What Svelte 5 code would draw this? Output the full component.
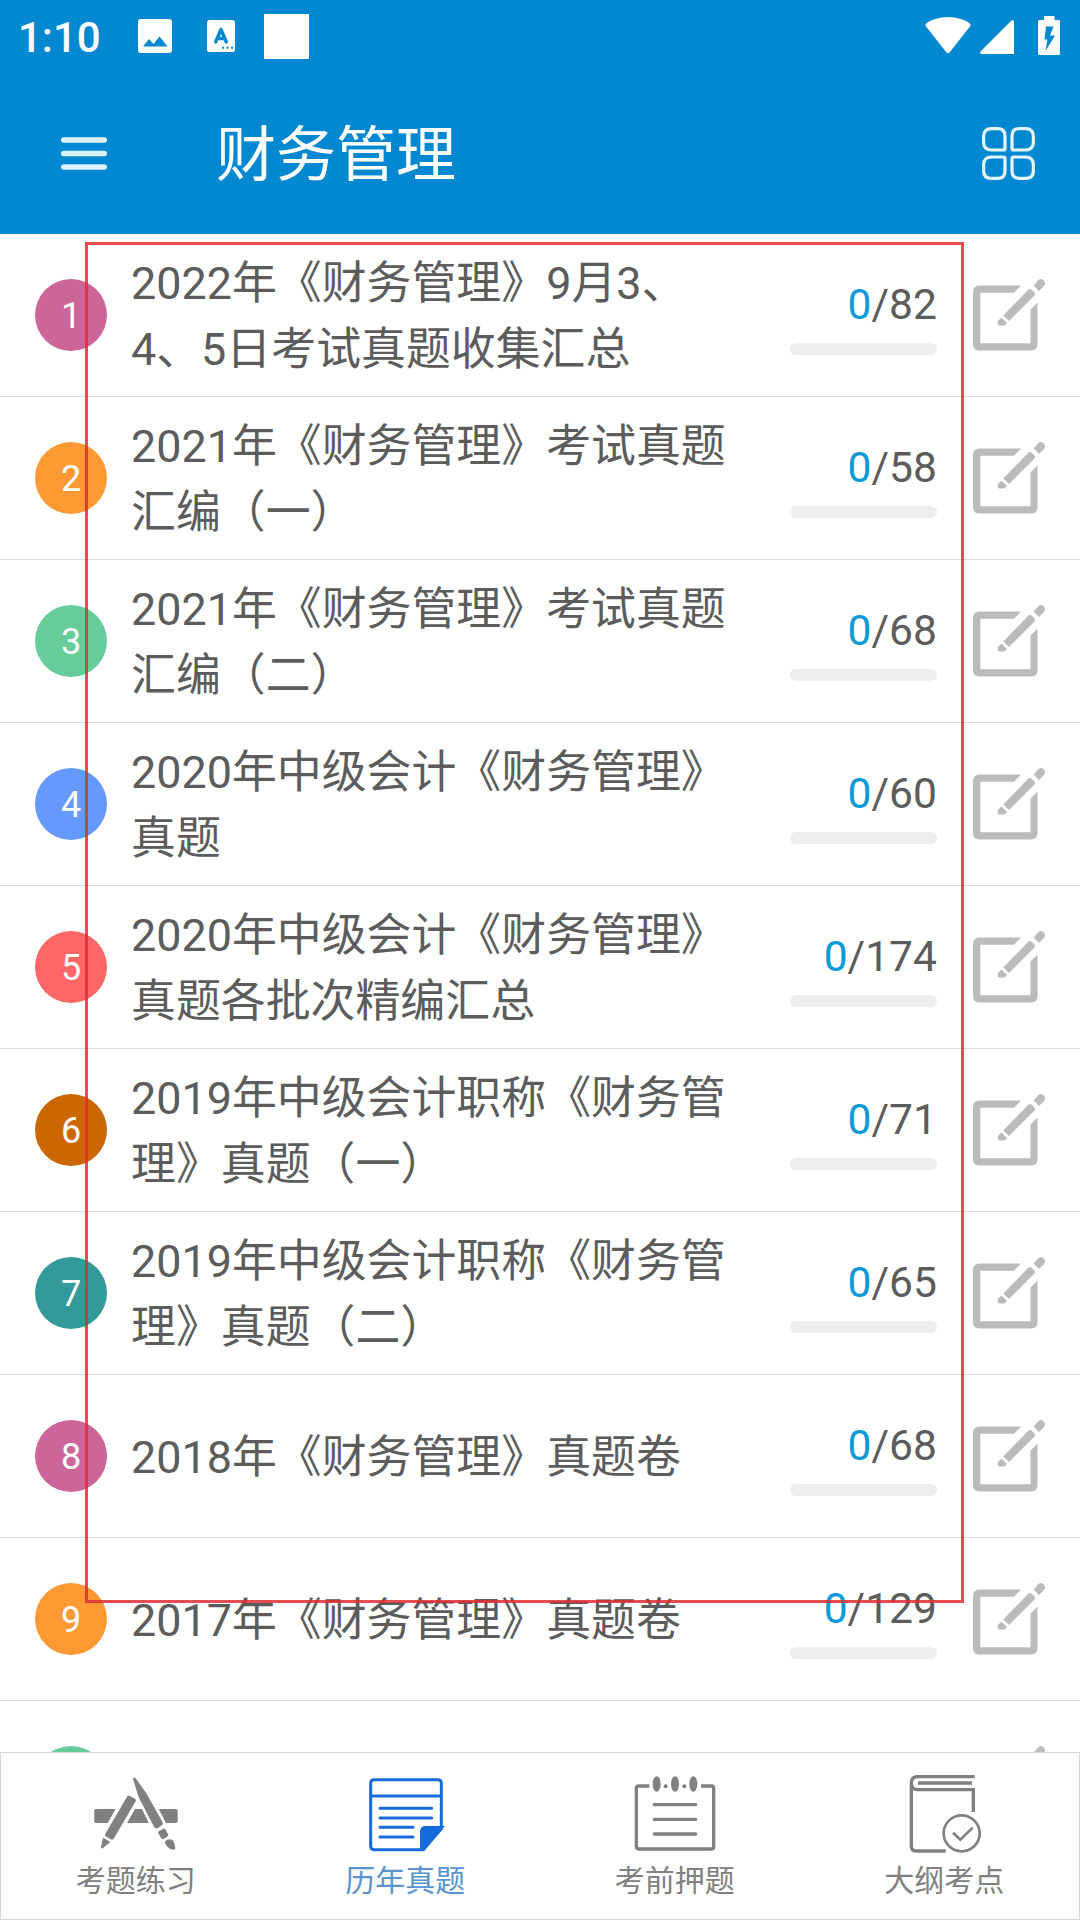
<script>
	const palette = ["#cc6699", "#ff9933", "#66cc99", "#6699ff", "#ff6666", "#cc6600", "#339999"];

	const papers = [
		{ title: "2022年《财务管理》9月3、4、5日考试真题收集汇总", done: 0, total: 82 },
		{ title: "2021年《财务管理》考试真题汇编（一）", done: 0, total: 58 },
		{ title: "2021年《财务管理》考试真题汇编（二）", done: 0, total: 68 },
		{ title: "2020年中级会计《财务管理》真题", done: 0, total: 60 },
		{ title: "2020年中级会计《财务管理》真题各批次精编汇总", done: 0, total: 174 },
		{ title: "2019年中级会计职称《财务管理》真题（一）", done: 0, total: 71 },
		{ title: "2019年中级会计职称《财务管理》真题（二）", done: 0, total: 65 },
		{ title: "2018年《财务管理》真题卷", done: 0, total: 68 },
		{ title: "2017年《财务管理》真题卷", done: 0, total: 129 },
		// not loaded yet
		{ title: "", done: 0, total: 0 }
	];

	const tabs = [
		{ id: "practice", label: "考题练习" },
		{ id: "papers", label: "历年真题" },
		{ id: "predict", label: "考前押题" },
		{ id: "outline", label: "大纲考点" }
	];

	let activeTab = "papers";
</script>

<main>
	<header>
		<div class="status">
			<span class="time">1:10</span>
			<svg class="picture" viewBox="0 0 34 34">
				<rect width="34" height="34" rx="3" fill="#fff" />
				<path d="M5 27.500L11 20l4.500 5L21.500 17.500L29.500 27.500Z" fill="#0288d1" />
			</svg>
			<svg class="letter" viewBox="0 0 28 32">
				<rect width="28" height="32" rx="2.500" fill="#fff" />
				<path d="M8.700 22L14 9.500L19.300 22M10.500 18.500h7" fill="none" stroke="#0288d1" stroke-width="3.400" stroke-linecap="round" stroke-linejoin="round" />
				<path d="M15 27.700h2M19.500 27.700h2M24 27.700h2" stroke="#0288d1" stroke-width="2" />
			</svg>
			<span class="square"></span>
			<span class="spacer"></span>
			<svg class="wifi" viewBox="0 0 46 37">
				<path d="M1 6.500Q10 0 23 0T45 6.500Q46 8 45 9.500L24.500 35.500Q23 37 21.500 35.500L1 9.500Q0 8 1 6.500Z" fill="#fff" />
			</svg>
			<svg class="signal" viewBox="0 0 34 34">
				<path d="M.500 31.500L31.500.500Q34-.500 34 1.500V34H1Q-.500 33.500.500 31.500Z" fill="#fff" />
			</svg>
			<svg class="battery" viewBox="0 0 22 39">
				<path d="M6 0H16.500V4H20.500Q22 4 22 5.500V37.500Q22 39 20.500 39H1.500Q0 39 0 37.500V5.500Q0 4 1.500 4H6Z" fill="#fff" />
				<path d="M8 10.500H15.500L12 19.500H17L7.500 35L9.500 23.500H6.500Z" fill="#0288d1" />
			</svg>
		</div>
		<div class="bar">
			<svg class="burger" viewBox="0 0 46 33">
				<path d="M2.800 3H43.200M2.800 16.500H43.200M2.800 30H43.200" stroke="#def2fc" stroke-width="5.600" stroke-linecap="round" />
			</svg>
			<h1>财务管理</h1>
			<svg class="grid" viewBox="0 0 53 53" fill="none" stroke="#e6f6ff" stroke-width="3.200">
				<path d="M9.500 1.600H15.500Q23 1.600 23 9V21.500Q23 23 21.500 23H9.500Q1.600 23 1.600 15V9.500Q1.600 1.600 9.500 1.600Z" />
				<path d="M43.500 1.600H37.500Q30 1.600 30 9V21.500Q30 23 31.500 23H43.500Q51.400 23 51.400 15V9.500Q51.400 1.600 43.500 1.600Z" />
				<path d="M9.500 51.400H15.500Q23 51.400 23 44V31.500Q23 30 21.500 30H9.500Q1.600 30 1.600 38V43.500Q1.600 51.400 9.500 51.400Z" />
				<path d="M43.500 51.400H37.500Q30 51.400 30 44V31.500Q30 30 31.500 30H43.500Q51.400 30 51.400 38V43.500Q51.400 51.400 43.500 51.400Z" />
			</svg>
		</div>
	</header>

	<ul class="list">
		{#each papers as paper, i}
			<li>
				<span class="badge" style="background-color:{palette[i % palette.length]}">{paper.title ? i + 1 : ""}</span>
				<span class="title">{paper.title}</span>
				<div class="progress">
					{#if paper.total}
						<span class="count"><b>{paper.done}</b>/{paper.total}</span>
						<span class="track"></span>
					{/if}
				</div>
				<svg class="edit" viewBox="0 0 72 72" fill="#bbb">
					<path d="M6.500 6.500H48L41 13.700H7.300V64.300H57.500V30.500L64.500 23.500V65Q64.500 71.500 58 71.500H6.500Q0 71.500 0 65V13Q0 6.500 6.500 6.500Z" />
					<path d="M30.300 36.500L55 11Q57 9 59 11L61 13Q63 15 61 17L36 42Z" />
					<path d="M28.500 38.500L34 44L31.500 46.500H26.500Q24.800 46.500 24.800 44.500V42Z" />
					<path d="M60.700 6.500L65.500 1Q68 -1 70.800 1.500Q73 4 71 7L66 12Z" />
				</svg>
			</li>
		{/each}
	</ul>

	<nav>
		{#each tabs as tab}
			<button class:active={activeTab === tab.id} on:click={() => activeTab = tab.id}>
				<svg viewBox="255 96 300 249" fill="none" stroke="currentColor" stroke-width="10">
					{#if tab.id === "practice"}
						<g fill="currentColor" stroke="none">
							<path d="M284 207H344L320 249H284Q280 249 280 245V211Q280 207 284 207Z" />
							<path d="M402 207H423L443 249H378Z" />
							<path d="M473 207H525Q530 207 530 212V244Q530 249 525 249H495Z" />
							<path d="M379 169Q382 165 387 168L402 176Q407 179 404 184L339 295Q335 301 329 298L314 289Q310 286 313 281Z" />
							<path d="M306 293L328 306L305 325Q300 327 300 321Z" />
							<path d="M396 116Q399 109 405 116L436 160L484 245Q488 253 481 257L471 264Q464 268 459 260L413 172Z" />
							<path d="M474 273L487 266Q491 264 494 269L501 283Q503 287 499 290L488 297Q484 299 480 294L472 280Q470 276 474 273Z" />
							<path d="M492 305Q497 297 508 298Q516 299 519 307L523 323Q523 330 517 329Q500 327 492 309Z" />
						</g>
					{:else if tab.id === "papers"}
						<path d="M312 119H504Q514 119 514 129V266L460 329H312Q302 329 302 319V129Q302 119 312 119ZM302 168H514M330 205H485M330 234H485M330 262H429M330 291H429" stroke-linecap="round" stroke-width="9" />
						<path d="M455 326V275Q455 263 467 263H514L460 326Z" fill="currentColor" />
					{:else if tab.id === "predict"}
						<path d="M328 138H296Q289 138 289 145V319Q289 327 297 327H514Q521 327 521 320V145Q521 138 514 138H483" />
						<path d="M343 194H467M343 238H467M343 282H467" stroke-linecap="round" />
						<g fill="currentColor" stroke="none">
							<ellipse cx="350" cy="132" rx="12" ry="23" />
							<ellipse cx="405" cy="132" rx="12" ry="23" />
							<ellipse cx="460" cy="132" rx="12" ry="23" />
							<circle cx="377" cy="139" r="6" />
							<circle cx="433" cy="139" r="6" />
						</g>
					{:else}
						<path d="M497 110H326Q307 110 307 130Q307 149 326 149H493V216M307 128V318Q307 333 322 333H410M327 129H489" />
						<circle cx="458" cy="280" r="54" stroke-width="8" />
						<path d="M432 278L454 299L491 263" stroke-width="8" />
					{/if}
				</svg>
				<span>{tab.label}</span>
			</button>
		{/each}
	</nav>

	<div class="frame"></div>
</main>

<style>
	:global(body) {
		margin: 0;
		background: #fff;
	}
	main {
		position: relative;
		display: flex;
		flex-direction: column;
		width: 1080px;
		height: 1920px;
		overflow: hidden;
		background: #fff;
		font-family: Roboto, "Noto Sans CJK SC", sans-serif;
	}
	svg {
		display: block;
		flex: none;
	}

	header {
		flex: none;
		height: 234px;
		background: #0288d1;
		color: #fff;
	}
	.status {
		display: flex;
		align-items: center;
		box-sizing: border-box;
		height: 72px;
		padding: 0 20px 0 18px;
	}
	.time {
		width: 120px;
		font-size: 42px;
		font-weight: 500;
		padding-top: 2px;
	}
	.picture {
		width: 34px;
		height: 34px;
	}
	.letter {
		width: 28px;
		height: 32px;
		margin: 0 29px 0 35px;
	}
	.square {
		width: 45px;
		height: 45px;
		background: #fff;
	}
	.spacer {
		flex: 1;
	}
	.wifi {
		width: 46px;
		height: 37px;
		margin-bottom: 1px;
	}
	.signal {
		width: 34px;
		height: 34px;
		margin: 2px 24px 0 9px;
	}
	.battery {
		width: 22px;
		height: 39px;
		margin-bottom: 2px;
	}

	.bar {
		display: flex;
		align-items: center;
		height: 162px;
		padding: 0 45px 0 61px;
	}
	.burger {
		width: 46px;
		height: 33px;
	}
	h1 {
		flex: 1;
		margin: 0 0 0 109px;
		padding-top: 5px;
		font-size: 60px;
		font-weight: 400;
		line-height: 80px;
	}
	.grid {
		width: 53px;
		height: 53px;
	}

	.list {
		flex: 1;
		min-height: 0;
		margin: 0;
		padding: 0;
		overflow: hidden;
		list-style: none;
	}
	li {
		display: flex;
		align-items: center;
		box-sizing: border-box;
		height: 163px;
		padding: 0 35px;
		border-bottom: 1px solid #ddd;
	}
	.badge {
		flex: none;
		box-sizing: border-box;
		width: 72px;
		height: 72px;
		padding-top: 1px;
		border-radius: 50%;
		color: #fff;
		font-size: 36px;
		line-height: 72px;
		text-align: center;
	}
	.title {
		width: 605px;
		margin: 0 53px 0 24px;
		padding-top: 4px;
		color: #5c5c5c;
		font-size: 44.900px;
		line-height: 66px;
	}
	.progress {
		display: flex;
		flex-direction: column;
		align-items: flex-end;
		width: 148px;
		margin-right: 36px;
	}
	.count {
		color: #5c5c5c;
		font-size: 42.600px;
		line-height: 56px;
	}
	.count b {
		color: #0a9ad7;
		font-weight: 400;
	}
	.track {
		width: 147px;
		height: 12px;
		margin-top: 11px;
		border-radius: 6px;
		background: #eee;
	}
	.edit {
		width: 72px;
		height: 72px;
	}

	nav {
		display: flex;
		flex: none;
		box-sizing: border-box;
		height: 168px;
		border: 1px solid #d8d8d8;
	}
	button {
		display: flex;
		flex: 1;
		flex-direction: column;
		align-items: center;
		padding: 19px 0 0;
		border: 0;
		background: none;
		color: #808080;
		font: inherit;
	}
	button svg {
		width: 100px;
		height: 83px;
	}
	button span {
		margin-top: 4px;
		font-size: 30px;
		line-height: 44px;
	}
	button.active svg {
		color: #156bdc;
	}
	button.active span {
		color: #5b94cc;
	}

	/* outline laid over the rows */
	.frame {
		position: absolute;
		top: 242px;
		left: 85px;
		box-sizing: border-box;
		width: 879px;
		height: 1361px;
		border: 3px solid rgba(223, 46, 50, 0.85);
		pointer-events: none;
	}
</style>
